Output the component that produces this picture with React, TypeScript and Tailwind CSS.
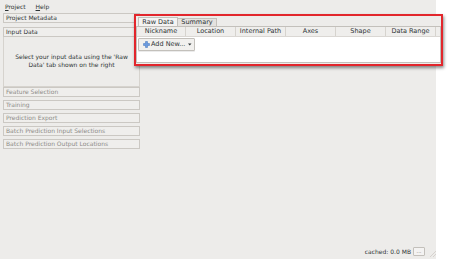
const sections = [
  { label: "Feature Selection" },
  { label: "Training" },
  { label: "Prediction Export" },
  { label: "Batch Prediction Input Selections" },
  { label: "Batch Prediction Output Locations" },
];

const columns = ["Nickname", "Location", "Internal Path", "Axes", "Shape", "Data Range"];

function SectionButton({ label, disabled }: { label: string; disabled?: boolean }) {
  return (
    <div
      className={`h-[10px] border border-[#cbc8c3] bg-[#efeeec] px-[2px] text-[6px] leading-[8px] ${
        disabled ? "text-[#8e8c88]" : "text-[#2e3436]"
      }`}
    >
      {label}
    </div>
  );
}

function PlusIcon() {
  return (
    <svg width="7" height="7" viewBox="0 0 7 7">
      <path d="M2.5 0.5h2v2h2v2h-2v2h-2v-2h-2v-2h2z" fill="#6b9be0" stroke="#3f70b8" strokeWidth="0.5" />
    </svg>
  );
}

export default function App() {
  return (
    <div className="flex h-[259px] w-[450px] overflow-hidden bg-white font-['DejaVu_Sans',sans-serif] text-[#2e3436]">
      <div className="flex w-[436px] shrink-0 flex-col bg-[#edecea]">
        {/* menu bar */}
        <div className="flex h-[12px] shrink-0 items-center gap-[10px] px-[5px] text-[6px]">
          <span>
            <span className="underline">P</span>roject
          </span>
          <span>
            <span className="underline">H</span>elp
          </span>
        </div>

        <div className="flex flex-1">
          {/* left drawer */}
          <div className="ml-[3px] mt-[1px] flex w-[137px] shrink-0 flex-col">
            <SectionButton label="Project Metadata" />
            <div className="mt-[4px]">
              <SectionButton label="Input Data" />
            </div>
            <div className="flex h-[50px] items-center justify-center border-x border-b border-[#d6d3ce] text-center text-[6px] leading-[7.5px] text-[#2e3436]">
              <p className="mt-[-2px]">
                Select your input data using the 'Raw
                <br />
                Data' tab shown on the right
              </p>
            </div>
            <div className="flex flex-col gap-[3px]">
              {sections.map((s) => (
                <SectionButton key={s.label} label={s.label} disabled />
              ))}
            </div>
          </div>

          {/* data selection tabs */}
          <div className="relative z-10 ml-[-6px] mt-[2px] h-[52px] w-[309px] shrink-0 border-2 border-[#e2262c] bg-[#edecea] shadow-[1px_2px_3px_rgba(0,0,0,0.45)]">
            <div className="flex px-[2px] pt-[1px] text-[6.5px]">
              <div className="h-[9px] w-[40px] border border-b-0 border-[#c3c0bb] bg-[#f4f3f2] text-center leading-[8px]">
                Raw Data
              </div>
              <div className="mt-[1px] h-[8px] w-[39px] border border-b-0 border-l-0 border-[#c3c0bb] bg-[#e4e2df] text-center leading-[7px]">
                Summary
              </div>
            </div>
            <div className="h-[37px] border border-[#c3c0bb] bg-white">
              <div className="flex h-[10px] border-b border-[#dad7d3] bg-[#efeeec] text-[6.5px] leading-[9px]">
                {columns.map((c) => (
                  <div key={c} className="w-[50px] shrink-0 border-r border-[#d6d3ce] text-center first:w-[49px]">
                    {c}
                  </div>
                ))}
              </div>
              <div className="ml-[1px] mt-[1px] flex h-[13px] w-[57px] items-center rounded-[1px] border border-[#c3c0bb] bg-[#f1f0ee] pl-[4px] text-[6.5px] shadow-[0_1px_0_rgba(0,0,0,0.08)]">
                <PlusIcon />
                <span className="ml-[1px]">Add New...</span>
                <svg className="ml-auto mr-[2px]" width="4" height="3" viewBox="0 0 4 3">
                  <path d="M0 0.5h3.5L1.75 2.5z" fill="#2e3436" />
                </svg>
              </div>
            </div>
          </div>
        </div>

        {/* status bar */}
        <div className="flex h-[14px] shrink-0 items-center justify-end pb-[2px] text-[6px] text-[#2e3436]">
          <span>cached: 0.0 MB</span>
          <div className="ml-[2px] flex h-[9px] w-[12px] items-center justify-center rounded-[1px] border border-[#c3c0bb] bg-[#f4f3f2] text-[5px] leading-[5px] text-[#6c6a66]">
            ...
          </div>
          <svg className="ml-[5px] self-end" width="6" height="6" viewBox="0 0 6 6">
            <path d="M6 0L0 6M6 3L3 6" stroke="#cfccc7" strokeWidth="0.8" />
          </svg>
        </div>
      </div>
      <div className="flex-1 bg-white" />
    </div>
  );
}
